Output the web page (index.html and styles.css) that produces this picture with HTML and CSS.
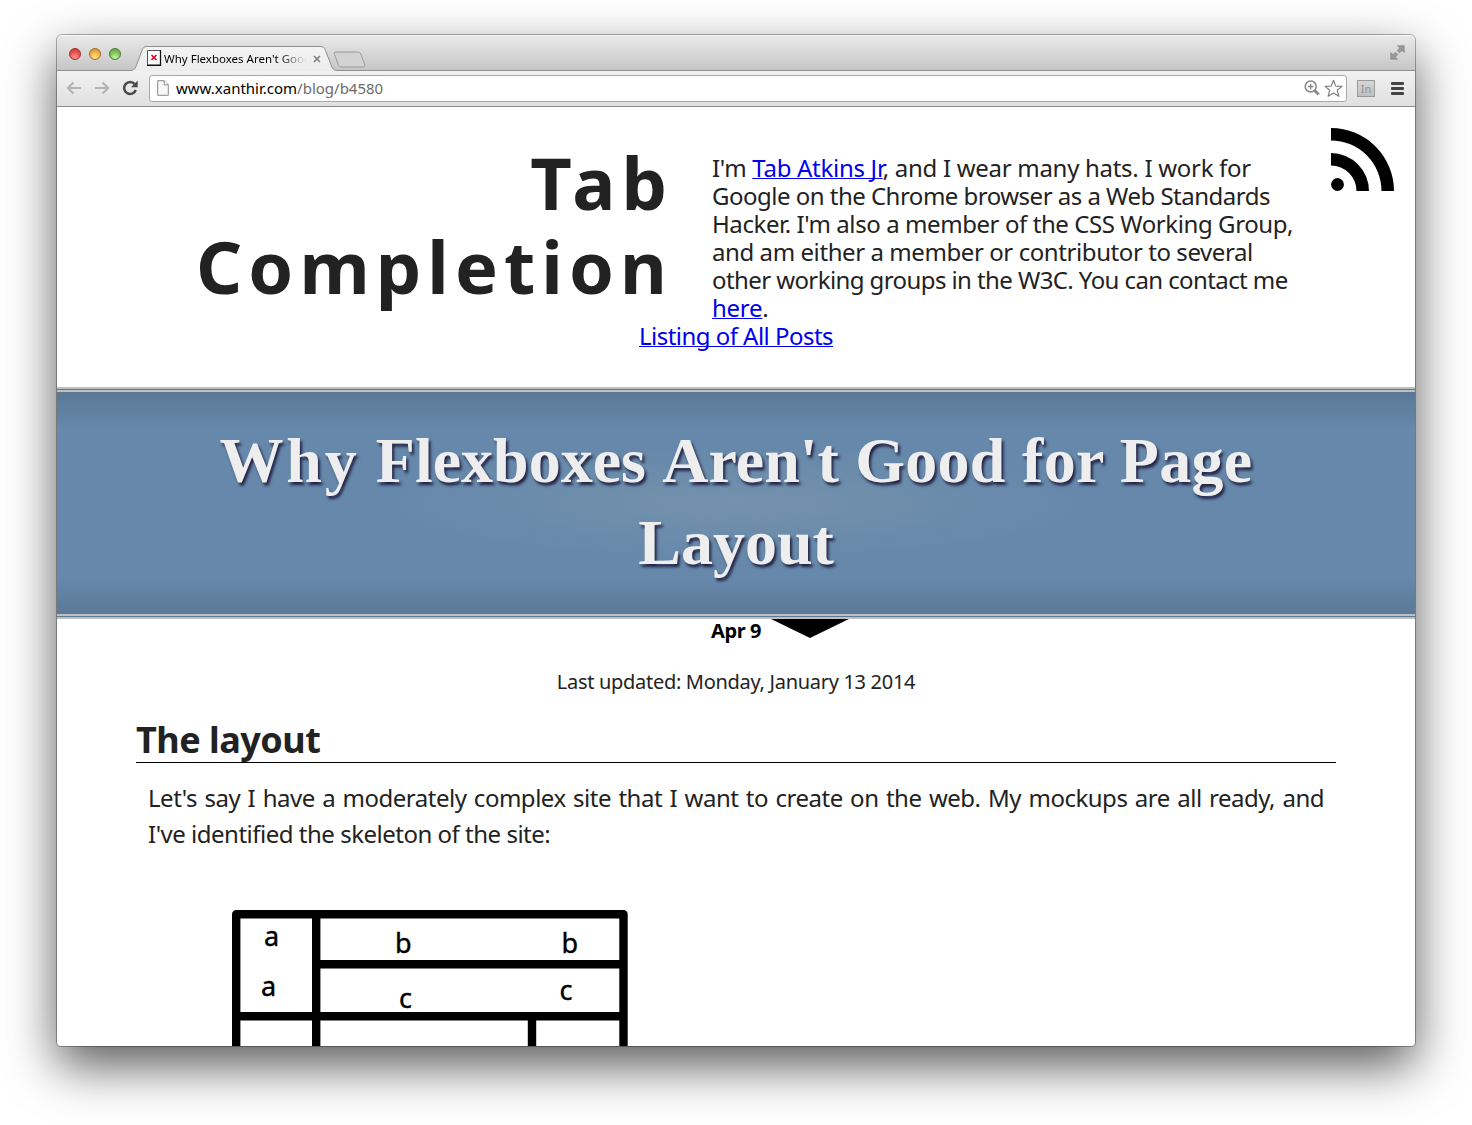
FILE: index.html
```html
<!DOCTYPE html>
<html lang="en">
<head>
<meta charset="utf-8">
<title>Why Flexboxes Aren't Good for Page Layout</title>
<link rel="stylesheet" href="styles.css">
</head>
<body>
<div class="window">
  <div class="tabstrip">
    <div class="lights"><i class="light red"></i><i class="light amber"></i><i class="light green"></i></div>
    <div class="tab">
      <svg class="tab-shape" width="208" height="25" viewBox="0 0 208 25"><defs><linearGradient id="tg" x1="0" y1="0" x2="0" y2="1"><stop offset="0" stop-color="#f3f3f3"/><stop offset="1" stop-color="#ededed"/></linearGradient></defs><path d="M0 24.500C3.500 24.500 5 23 6 20.500L12 4.500C13 1.500 14 .5 17 .5H190C193 .5 194.500 1.500 195.500 4.500L201.500 20C202.500 23 204 24.500 208 24.500V25H0Z" fill="url(#tg)"/><path d="M0 24.500C3.500 24.500 5 23 6 20.500L12 4.500C13 1.500 14 .5 17 .5H190C193 .5 194.500 1.500 195.500 4.500L201.500 20C202.500 23 204 24.500 208 24.500" fill="none" stroke="#8f8f8f"/></svg>
      <svg class="favicon" width="15" height="16" viewBox="0 0 15 16"><path d="M.5 .5H13.500V15H.5Z" fill="#fff" stroke="#555"/><path d="M13.500 0V15.300H0" fill="none" stroke="#111" stroke-width="1.300"/><path d="M4.500 5L9.500 10M9.500 5L4.500 10" stroke="#e8001c" stroke-width="1.600"/></svg>
      <span class="tab-title">Why Flexboxes Aren't Good</span>
      <svg class="tab-close" width="8" height="8" viewBox="0 0 8 8"><path d="M1 1L7 7M7 1L1 7" stroke="#808080" stroke-width="1.700"/></svg>
    </div>
    <svg class="newtab" width="34" height="17" viewBox="0 0 34 17"><path d="M3 1H24.500C26.500 1 27.300 1.600 28 3.500L31.500 13C32.200 15 31.800 16 30 16H9C7 16 6 15.300 5.300 13.500L1.500 3.500C.8 1.700 1.300 1 3 1Z" fill="#d3d3d3" stroke="#999"/></svg>
    <svg class="expand" width="15" height="15" viewBox="0 0 15 15"><path d="M7.500 .7H14.300V7.500L12 5.500L9.500 7.800L7.200 5.500L9.700 3ZM.7 7.500L3 9.500L5.500 7.200L7.800 9.500L5.300 12L7.500 14.300H.7Z" fill="#999" stroke="#777" stroke-width=".5"/></svg>
  </div>
  <div class="toolbar">
    <svg class="nav" width="16" height="14" viewBox="0 0 16 14"><path d="M15 7H2M7.500 1.500L2 7L7.500 12.500" fill="none" stroke="#b4b4b4" stroke-width="2.200"/></svg>
    <svg class="nav" width="16" height="14" viewBox="0 0 16 14"><path d="M1 7H14M8.500 1.500L14 7L8.500 12.500" fill="none" stroke="#b4b4b4" stroke-width="2.200"/></svg>
    <svg class="reload" width="17" height="16" viewBox="0 0 17 16"><path d="M12.800 4.200A6 6 0 1 0 13.800 10" fill="none" stroke="#4a4a4a" stroke-width="2.500"/><path d="M15.700 .5V7.300H8.900Z" fill="#4a4a4a"/></svg>
    <div class="omnibox">
      <svg class="doc" width="12" height="16" viewBox="0 0 12 16"><path d="M.7 .7H7.200L11.300 4.800V15.300H.7Z" fill="#f7f7f7" stroke="#8a8a8a"/><path d="M7.200 .7V4.800H11.300" fill="#fff" stroke="#8a8a8a"/></svg>
      <span class="url">www.xanthir.com<span class="path">/blog/b4580</span></span>
      <svg width="16" height="16" viewBox="0 0 16 16"><circle cx="6.700" cy="6.500" r="5.500" fill="none" stroke="#888" stroke-width="1.500"/><path d="M4 6.500H9.400M6.700 3.800V9.200" stroke="#888" stroke-width="1.300"/><path d="M10.700 10.500L14.700 14.500" stroke="#888" stroke-width="2.600"/></svg>
      <svg class="star" width="19" height="19" viewBox="0 0 19 19"><path d="M9.500 1.300L11.800 7.100L18 7.400L13.200 11.200L14.900 17.300L9.500 13.900L4.100 17.300L5.800 11.200L1 7.400L7.200 7.100Z" fill="#fff" stroke="#808080" stroke-width="1.200" stroke-linejoin="round"/></svg>
    </div>
    <span class="ext">In</span>
    <span class="menu"><i></i><i></i><i></i></span>
  </div>
  <div class="page">
    <header class="site">
      <h1>Tab<br>Completion</h1>
      <p class="bio"><span class="b1">I'm <a>Tab Atkins Jr</a>, and I wear many hats. I work for</span><br><span class="b2">Google on the Chrome browser as a Web Standards</span><br><span class="b3">Hacker. I'm also a member of the CSS Working Group,</span><br><span class="b4">and am either a member or contributor to several</span><br><span class="b5">other working groups in the W3C. You can contact me</span><br><span class="b6"><a>here</a>.</span></p>
      <svg class="rss" width="64" height="64" viewBox="0 0 64 64"><circle cx="6.500" cy="56.500" r="6.400"/><path d="M0 0A63 63 0 0 1 63 63H50.500A50.500 50.500 0 0 0 0 12.500Z"/><path d="M0 25A38 38 0 0 1 38 63H25.500A25.500 25.500 0 0 0 0 37.500Z"/></svg>
    </header>
    <nav class="all"><a>Listing of All Posts</a></nav>
    <div class="banner"><h2><span class="w1">Why</span> <span class="w2">Flexboxes</span> <span class="w3">Aren't</span> Good for Page<br><span class="last">Layout</span></h2></div>
    <div class="date"><b>Apr 9</b><svg width="78" height="19" viewBox="0 0 78 19"><path d="M0 0H78L39 19Z"/></svg></div>
    <p class="updated">Last updated: Monday, January 13 2014</p>
    <article>
      <h3>The layout</h3>
      <p>Let's say I have a moderately complex site that I want to create on the web. My mockups are all ready, and I've identified the skeleton of the site:</p>
      <svg class="skeleton" width="396" height="137" viewBox="0 0 396 137"><path d="M4.200 137V4.200H391.500V137M84.200 4.200V137M84.200 54.200H391.500M4.200 106.300H391.500M300 137V110" fill="none" stroke="#000" stroke-width="8.400" stroke-linejoin="round" stroke-linecap="round"/><text x="32" y="36">a</text><text x="29" y="86">a</text><text x="163" y="43">b</text><text x="329.500" y="43">b</text><text x="167" y="98">c</text><text x="327.500" y="90">c</text></svg>
    </article>
  </div>
</div>
</body>
</html>
```
FILE: styles.css
```css
* { box-sizing: border-box; }
body { margin: 0; background: #fff; color: #222; font-family: "Noto Sans", sans-serif; width: 1472px; height: 1125px; overflow: hidden; padding: 35px 57px 0; }
svg { flex: none; display: block; }
.window { width: 1358px; height: 1011px; border-radius: 5px 5px 4px 4px; overflow: hidden; box-shadow: 0 0 0 1px rgba(0,0,0,.3), 0 20px 50px rgba(0,0,0,.65); display: flex; flex-direction: column; background: #fff; }
.tabstrip { flex: none; height: 36px; background: linear-gradient(#e9e9e9, #c6c6c6); border-bottom: 1px solid #909090; border-top: 1px solid #f6f6f6; display: flex; align-items: flex-end; }
.lights { display: flex; gap: 8px; padding: 0 15px 10px 12px; }
.light { width: 12px; height: 12px; border-radius: 50%; border: 1px solid; }
.red { background: radial-gradient(circle at 50% 85%, #ff9d95, #ee5451 50%, #c9302f); border-color: #9c3030; }
.amber { background: radial-gradient(circle at 50% 85%, #ffe594, #f5b64a 50%, #cf8728); border-color: #a06a26; }
.green { background: radial-gradient(circle at 50% 85%, #cdf5a4, #86c45e 50%, #559b3a); border-color: #487c33; }
.tab { position: relative; width: 208px; height: 25px; margin: 0 0 -1px -6px; display: flex; align-items: center; padding: 0 0 1px 17px; }
.tab-shape { position: absolute; left: 0; top: 0; }
.favicon { position: relative; margin-right: 2px; }
.tab-title { position: relative; width: 143px; overflow: hidden; white-space: nowrap; font-size: 11.500px; line-height: 16px; padding-top: 1px; color: #000; -webkit-mask-image: linear-gradient(90deg, #000 115px, transparent 143px); mask-image: linear-gradient(90deg, #000 115px, transparent 143px); }
.tab-close { position: relative; margin: 1px 0 0 6px; }
.newtab { margin: 0 0 2px -5px; }
.expand { margin: 0 10px 10px auto; }
.toolbar { flex: none; height: 36px; background: linear-gradient(#f1f1f1, #e0e0e0); border-bottom: 1px solid #8c8c8c; display: flex; align-items: center; padding: 0 11px 1px 9px; }
.nav { margin-right: 12px; }
.reload { margin-right: 10px; }
.omnibox { flex: none; width: 1198px; height: 27px; background: #fff; border: 1px solid #a9a9a9; border-radius: 3px; display: flex; align-items: center; padding: 0 3px 0 7px; }
.doc { margin-right: 7px; }
.url { flex: 1; font-size: 15px; line-height: 20px; color: #000; }
.path { color: #6c6c6c; }
.star { margin-left: 4px; }
.ext { width: 18px; height: 17px; margin-left: 10px; border: 1px solid #999; background: linear-gradient(#d6d6d6, #bfbfbf); color: #929292; font-size: 11px; line-height: 15px; text-align: center; }
.menu { margin-left: auto; display: flex; flex-direction: column; gap: 2px; }
.menu i { width: 13px; height: 3px; background: #444; border-radius: 1px; }
.page { flex: 1; overflow: hidden; display: flex; flex-direction: column; }
.page > * { flex: none; }
.page a { color: #00e; text-decoration: underline; text-decoration-thickness: 1px; text-decoration-skip-ink: none; }
.site { position: relative; display: flex; height: 215px; }
h1, h2, h3, p { margin: 0; }
h1 { width: 616px; padding-top: 33px; text-align: right; font-size: 72px; line-height: 84px; letter-spacing: 6.100px; white-space: nowrap; }
.bio { margin: 47px 0 0 39px; font-size: 24px; line-height: 28px; white-space: nowrap; }
.b1 { letter-spacing: -.29px; }
.b2 { letter-spacing: -.51px; }
.b3 { letter-spacing: -.42px; }
.b4 { letter-spacing: -.42px; }
.b5 { letter-spacing: -.59px; }
.b6 { letter-spacing: -.25px; }
.rss { position: absolute; left: 1274px; top: 21px; fill: #000; }
.all { text-align: center; font-size: 24px; line-height: 28px; height: 65px; letter-spacing: -.53px; }
.banner { height: 232px; border-top: 5px double #bfbfbf; border-bottom: 5px double #bfbfbf; padding-top: 28px; background: radial-gradient(ellipse 350px 56px at center, rgba(136,160,176,.4), transparent), linear-gradient(#5b7896, #6688aa 36px, #6688aa 188px, #5b7896) #6688aa; }
.banner h2 { text-align: center; font: bold 64px/81.600px "Liberation Serif", serif; letter-spacing: .3px; color: #eee; text-shadow: 2px 3px 3px #224; white-space: nowrap; }
.banner .w1 { letter-spacing: 2.800px; }
.banner .w2 { letter-spacing: 0; }
.banner .w3 { letter-spacing: 0; }
.banner .last { letter-spacing: 0; }
.date { display: flex; height: 48px; padding-left: 654px; gap: 10px; font-size: 20px; line-height: 24px; color: #000; }
.date b { letter-spacing: -.4px; }
.updated { text-align: center; font-size: 20px; line-height: 30px; height: 54px; letter-spacing: -.3px; }
article { padding: 0 79px; }
h3 { height: 42px; border-bottom: 1px solid #000; font-size: 36px; line-height: 38px; letter-spacing: -.5px; }
article p { padding: 17px 12px 0; font-size: 24px; line-height: 36px; letter-spacing: -.49px; text-align: justify; }
.skeleton { margin: 58px 0 0 96px; font: 27px "Noto Sans", sans-serif; stroke: #000; stroke-width: .4px; }
```
